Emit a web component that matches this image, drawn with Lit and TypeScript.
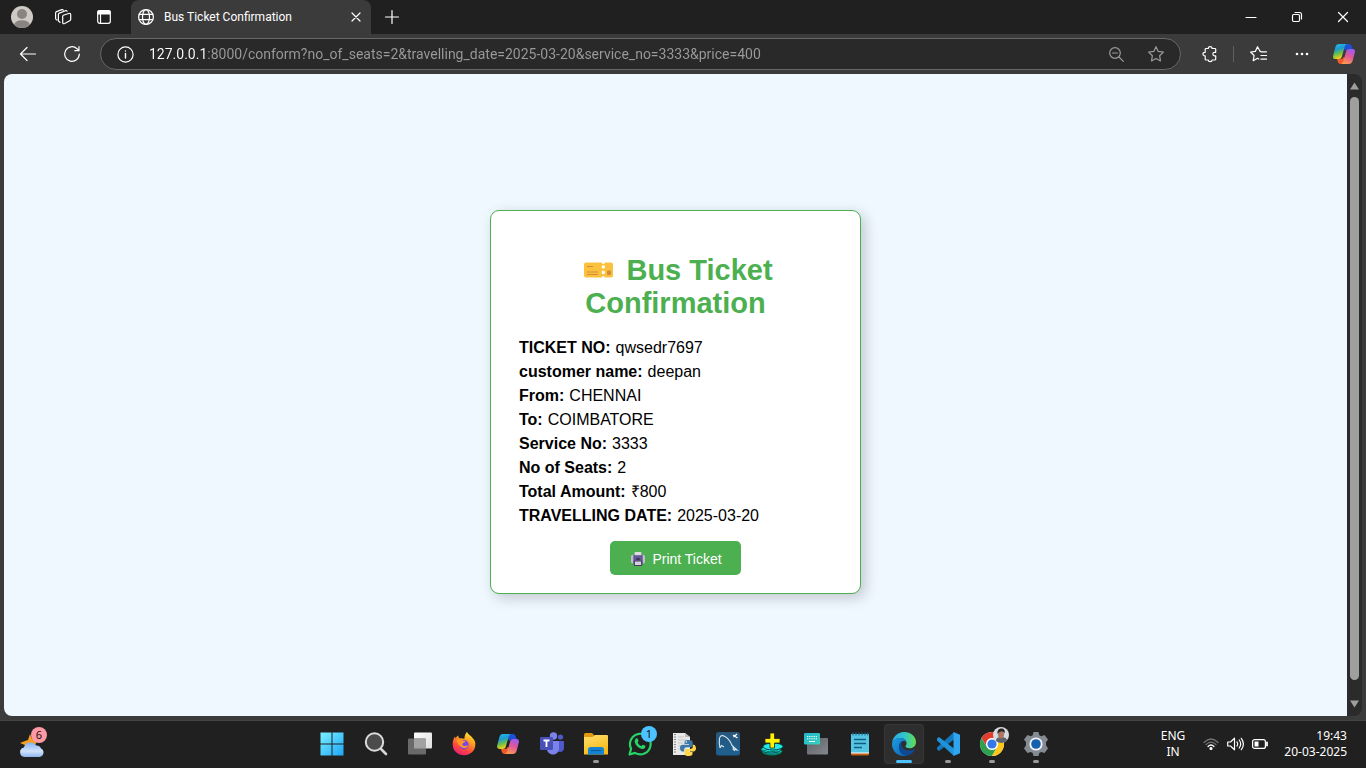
import { LitElement, html, css, svg } from "lit";
import { customElement } from "lit/decorators.js";

const line = css`
  .ln { fill: none; stroke: currentColor; stroke-width: 1.2; stroke-linecap: round; stroke-linejoin: round; }
`;

const copilot = (id: string) => svg`
  <defs>
    <linearGradient id="${id}a" x1="0" y1="0" x2="0.3" y2="1"><stop offset="0" stop-color="#1fc0f5"/><stop offset=".4" stop-color="#1f9ad0"/><stop offset=".7" stop-color="#6cc04a"/><stop offset="1" stop-color="#f2d018"/></linearGradient>
    <linearGradient id="${id}b" x1=".7" y1="0" x2=".3" y2="1"><stop offset="0" stop-color="#9b5cf0"/><stop offset=".45" stop-color="#e0569c"/><stop offset="1" stop-color="#fc9a4e"/></linearGradient>
  </defs>
  <path d="M12 2h5q2 0 2.600 2l1 3h-4q-2 0-2.700 2l-1.500-1z" fill="#1b50d8"/>
  <path d="M12 22H8.500q-2 0-2.600-2L5 17h4q2 0 2.500-2l1.500 1z" fill="#ee5a2c"/>
  <path d="M6.500 2H15q-1.600.4-2.200 2.400L9.700 15q-.6 2-2.700 2H3.500Q.3 17 1.200 13.500L3.400 5Q4.300 2 6.500 2z" fill="url(#${id}a)"/>
  <path d="M17.500 22H9q1.600-.4 2.200-2.400L14.300 9q.6-2 2.700-2h3.500q3.200 0 2.300 3.500L20.600 19q-.9 3-3.100 3z" fill="url(#${id}b)"/>`;

const appIcons: { name: string; run?: boolean; active?: boolean; badge?: string; art: unknown }[] = [
  {
    name: "Start",
    art: svg`<defs><linearGradient id="win" x1="0" y1="0" x2="1" y2="1" gradientUnits="objectBoundingBox"><stop offset="0" stop-color="#7cf0ff"/><stop offset="1" stop-color="#1ca6f8"/></linearGradient></defs>
      <path d="M.5.500h11v11H.500zM12.500.500h11v11h-11zM.5 12.500h11v11H.500zM12.500 12.500h11v11h-11z" fill="url(#win)"/>`,
  },
  {
    name: "Search",
    art: svg`<circle cx="10.500" cy="10" r="8.700" fill="#4b4b4b" stroke="#dcdcdc" stroke-width="2"/><path d="M17 17l5 5" stroke="#d5d5d5" stroke-width="2.600" stroke-linecap="round"/>`,
  },
  {
    name: "Task view",
    art: svg`<defs><linearGradient id="tv" x2="1" y2="1"><stop offset="0" stop-color="#fff"/><stop offset="1" stop-color="#dedede"/></linearGradient></defs>
      <rect x="6" y=".5" width="18" height="16" rx="1" fill="url(#tv)"/><rect x="0" y="6.500" width="18" height="16" rx="1" fill="#6a6a6a"/><path d="M6 6.500h11q1 0 1 1v9H6z" fill="#a2a2a2"/>`,
  },
  {
    name: "Firefox",
    art: svg`<defs><linearGradient id="ff" x1=".8" y1="0" x2=".3" y2="1"><stop offset="0" stop-color="#ffee3d"/><stop offset=".35" stop-color="#ffa21f"/><stop offset=".7" stop-color="#ff4a3d"/><stop offset="1" stop-color="#ea1b7a"/></linearGradient></defs>
      <path d="M15 0c1 2.500 4.500 4 6 6.500C23.300 9 23.500 11 23.300 13 23 19 18 23.300 12 23.300S.7 19 .7 12.500C.7 9 1.500 6.500 3 4.500l.6 2C4.300 5 5 4 6.200 3.400 6.300 5 7 5.900 8 6.300c1.500-.2 3 0 4.400.5C12.500 4 13.300 1.500 15 0z" fill="url(#ff)"/>
      <circle cx="12" cy="12.800" r="4.700" fill="#7a45e8"/><path d="M4.500 8.500c2-1.800 5-1.500 6.300 0l2.700.6c-.3 1.700-2.500 1.800-3 2.600-.5 1 .2 2.300 2 2.200 1.600 0 2.300-.8 3.600-.4-1 2.300-3.200 3-5.200 2.300-3.500-1-4.500-3.600-6.400-7.300z" fill="#ff9822"/>`,
  },
  { name: "Copilot", art: copilot("tb") },
  {
    name: "Teams",
    art: svg`<circle cx="20.500" cy="5" r="2.600" fill="#5059c9"/><circle cx="13.500" cy="4" r="3.700" fill="#7b83eb"/><path d="M17 9h6q1 0 1 1v5.500c0 3-2 4.500-4 4.500s-3-1-3-1z" fill="#5059c9"/><path d="M8 9h11v7c0 4-2.500 6.500-6 6.500S7.500 20 7 18z" fill="#7b83eb"/><rect x="0" y="5" width="13" height="13" rx="1.300" fill="#4951b8"/><path d="M3.500 8.500h6M6.500 8.500V15" stroke="#fff" stroke-width="1.800"/>`,
  },
  {
    name: "File Explorer", run: true,
    art: svg`<defs><linearGradient id="fe" y2="1" x2=".4"><stop offset="0" stop-color="#ffdf70"/><stop offset="1" stop-color="#f9b916"/></linearGradient></defs>
      <path d="M0 2.500Q0 1 1.500 1H8l2.500 2.500L9 6H0z" fill="#e09a10"/><path d="M0 5h8.500L11 3h12q1 0 1 1v18.500H0z" fill="url(#fe)"/><path d="M4 22.500V17.500Q4 15 6.500 15h11q2.500 0 2.500 2.500v5z" fill="#1583d3"/><path d="M7 18.500h10" stroke="#0b5ca0" stroke-width="1.200"/>`,
  },
  {
    name: "WhatsApp", badge: "1",
    art: svg`<path d="M1.500 22.500l1.600-5.800A10.300 10.300 0 1 1 7 20.900z" fill="#202020" stroke="#25d366" stroke-width="2.200" stroke-linejoin="round"/><path d="M8 6.500c1-.6 1.600-.2 2 1l.5 1.300c.1.700-.9 1.300-.8 1.900.8 1.500 2 2.600 3.500 3.300.7.200 1.200-1.200 1.900-1.200l2.100 1c.5.400.1 2-.8 2.700-1.800 1.200-5 0-7-2-2.300-2.200-4-5.800-1.400-8z" fill="#25d366"/>`,
  },
  {
    name: "Python IDLE",
    art: svg`<path d="M1 1h12l5 4v18H1z" fill="#e9e9e9"/><path d="M13 1l5 4h-5z" fill="#b9b9b9"/><path d="M3 2v20" stroke="#666" stroke-width="1.500" stroke-dasharray="1 1.500"/><path d="M6 5h6M6 8h9M6 11h5M6 14h3M6 17h3" stroke="#c5c5c5"/>
      <path d="M16 8c-3 0-3.500 1-3.500 2.200V12H17v.8h-6.300C9 12.800 8 14 8 16s1 3.400 2.500 3.400h1.700v-2c0-1.300 1.200-2.200 2.500-2.200h4c1.200 0 2-.9 2-2v-3C20.700 8.800 19.500 8 16 8z" fill="#3c78a8"/><path d="M17 24c3 0 3.500-1 3.500-2.200V20H16v-.6h6c1.200-.3 2-1.600 2-3.200s-1-3.500-2.200-3.500h-1v2c0 1.300-1.200 2.200-2.500 2.200h-3.600c-1.200 0-2 .9-2 2v3c0 1.400 1.200 2.100 4.300 2.100z" fill="#ffd748"/><circle cx="14.300" cy="10" r=".8" fill="#fff"/>`,
  },
  {
    name: "MySQL Workbench",
    art: svg`<defs><linearGradient id="my" x2="0" y2="1"><stop offset="0" stop-color="#28577b"/><stop offset="1" stop-color="#1e6090"/></linearGradient></defs><rect width="24" height="23.500" rx="2.500" fill="url(#my)"/><path d="M4 16c-.8-4-1-7-.5-9.500C4 3.800 6 3 8 4c4 2 6.500 5 8 9.500l5 4.500-4.500-1M16.500 13.500l2 5.500M4 16l1.500-2.500L8 15" fill="none" stroke="#d9e7f0" stroke-width="1.100"/><path d="M17 3l4.500 3M21 2l-3.500 3" stroke="#fff" stroke-width="1.300"/>`,
  },
  {
    name: "MySQL Installer",
    art: svg`<ellipse cx="12" cy="19.500" rx="10" ry="3.700" fill="#19c7c9" stroke="#063"/><ellipse cx="11" cy="17.500" rx="10" ry="3.500" fill="#20e0e0" stroke="#044"/><ellipse cx="13" cy="14.500" rx="10" ry="3.500" fill="#24e8e6" stroke="#044"/><path d="M3 20.500q8 4 18 0M2 18q7 3 16 1" stroke="#076" fill="none"/><path d="M10 1h4.500v5.500H20V11h-5.500v5H10v-5H5V6.500h5z" fill="#fff200" stroke="#222" stroke-width=".8"/>`,
  },
  {
    name: "On-screen keyboard",
    art: svg`<defs><linearGradient id="kb" x2="1" y2="1"><stop offset="0" stop-color="#20b6cd"/><stop offset="1" stop-color="#3ad3bc"/></linearGradient><linearGradient id="kc" x2="1" y2="1"><stop offset="0" stop-color="#5d6064"/><stop offset="1" stop-color="#85888e"/></linearGradient></defs>
      <rect x="3" y="6" width="21" height="16.500" rx="1" fill="url(#kc)"/><rect x="0" y="1" width="16" height="11.500" rx="1.300" fill="url(#kb)"/><path d="M3 4.500h10M3 6.800h10" stroke="#fff" stroke-width="1.100" stroke-dasharray="1.200 1"/><path d="M5 9.500h6" stroke="#fff"/>`,
  },
  {
    name: "Notepad",
    art: svg`<path d="M3 20h18v2.500q0 1-1 1H4q-1 0-1-1z" fill="#c25d14"/><path d="M3 20h18v1.500H3z" fill="#fff"/><path d="M3 2h18v18.500H3z" fill="#55c5e4"/><path d="M5 .5v3M8 .5v3M11 .5v3M14 .5v3M17 .5v3M19.800.500v3" stroke="#1d6c8d" stroke-width="1.100"/><path d="M6 7.500h12M6 11.500h12M6 15.500h8" stroke="#115e7f" stroke-width="1.500"/>`,
  },
  {
    name: "Microsoft Edge", run: true, active: true,
    art: svg`<defs><linearGradient id="ea" x1="0" y1=".3" x2="1" y2=".3"><stop offset="0" stop-color="#2aa9e4"/><stop offset=".5" stop-color="#30c5cf"/><stop offset="1" stop-color="#63db4e"/></linearGradient><linearGradient id="eb" y2="1"><stop offset="0" stop-color="#1b9de2"/><stop offset="1" stop-color="#1164b5"/></linearGradient></defs>
      <path d="M0 11C.6 5 5.500 0 12 0c7 0 12 4.800 12 10 0 4-3 6.300-6.500 6.300-3 0-4-1.200-4-2 0-.8 1.300-1.300 1-3.600C14 8 12 6 8.500 6 4 6 .8 8.500 0 11z" fill="url(#ea)"/>
      <path d="M0 12C.3 8 4 6 8.500 6c3.500 0 5.500 2 6 4.300C13.500 9 12 8.700 11 9c-3 1-4 4-3.500 7C8 20 11.500 23 14.700 23.700 13.800 24 13 24 12 24 5 24 0 18.500 0 12z" fill="url(#eb)"/><path d="M11 9c-1.500 1.300-2 3-1.300 5 1 3.300 5 4.700 8.300 4.500 2-.2 3.500-.8 4.700-1.500.3 0 .5.300.3.600C21.300 21 18.500 23.500 14.700 23.700 10 23.500 7 20 7 15.500 7 12 8.500 9.500 11 9z" fill="#0d4a92"/>`,
  },
  {
    name: "Visual Studio Code", run: true,
    art: svg`<path d="M18 0L1 15.500v2l2 1.500 15-11.500z" fill="#1478bd"/><path d="M18 24L1 8.500v-2L3 5l15 11.500z" fill="#1e93da"/><path d="M17.500 0L24 2.800v18.400L17.500 24z" fill="#2fa5f0"/>`,
  },
  {
    name: "Google Chrome", run: true,
    art: svg`<circle cx="12" cy="12" r="12" fill="#fff"/><path d="M1.600 6A12 12 0 0 1 22.400 6H12a6 6 0 0 0-5.200 9z" fill="#e33b2e"/><path d="M1.600 6A12 12 0 0 0 12 24l5.200-9a6 6 0 0 1-10.400 0z" fill="#2fa04f"/><path d="M22.400 6A12 12 0 0 1 12 24l5.200-9A6 6 0 0 0 12 6z" fill="#fdc81a"/><circle cx="12" cy="12" r="5.800" fill="#fff"/><circle cx="12" cy="12" r="4.600" fill="#3478e8"/>
      <circle cx="21" cy="3" r="8" fill="#d8dbe0"/><path d="M16 9c0-3 2-4 5-4s6 1 6 3.500A8 8 0 0 1 16 9z" fill="#5e626b"/><ellipse cx="21" cy="2.500" rx="3" ry="4" fill="#a97662"/><path d="M17.500 2c-.5-4 1.500-5.500 4-5.500s4 2 3 5c-1-3-4-3.500-7 .5z" fill="#2a2525"/>`,
  },
  {
    name: "Settings", run: true,
    art: svg`<path d="M9.500 0h5l.8 3.200 2 1L20.500 3 24 7.500l-2 2.700v3L24 16.500 20.500 21l-3.200-1-2 1-.8 3h-5l-.8-3-2-1-3.200 1L0 16.500l2-3.300v-3L0 7.500 3.500 3l3.200 1.200 2-1z" fill="#858b93"/><circle cx="12" cy="12" r="6.600" fill="#f1f3f5"/><circle cx="12" cy="12" r="4.800" fill="#1560ad"/>`,
  },
];

@customElement("browser-chrome")
export class BrowserChrome extends LitElement {
  static styles = [line, css`
    :host { display: block; color: #fff; font-family: Roboto, "Open Sans", sans-serif; }
    button { all: unset; display: grid; place-items: center; box-sizing: border-box; }
    svg { display: block; overflow: visible; }
    .titlebar { display: flex; height: 34px; background: #202020; }
    .left { display: flex; align-items: center; padding-left: 1px; width: 129px; box-sizing: border-box; }
    .left button { width: 41px; }
    .tab { display: flex; align-items: center; width: 240px; height: 34px; box-sizing: border-box; padding: 0 8px 0 7px; gap: 10px; background: #3b3b3b; border-radius: 8px 8px 0 0; margin-left: 2px; font-size: 12px; white-space: nowrap; }
    .tab .title { flex: 1; }
    .plus { width: 42px; }
    .window { display: flex; margin-left: auto; }
    .window button { width: 46px; }
    .toolbar { display: flex; align-items: center; height: 40px; background: #3b3b3b; }
    .nav { display: flex; padding-left: 6px; padding-right: 6px; }
    .nav button { width: 44px; }
    .address { flex: 1; display: flex; align-items: center; height: 32px; box-sizing: border-box; border: 1px solid #686868; border-radius: 16px; background: #292929; padding: 0 4px 0 16px; }
    .url { flex: 1; min-width: 0; border: 0; outline: 0; padding: 0 0 0 15px; height: 28px; font: 14px Roboto, sans-serif; color: transparent; background: linear-gradient(90deg, #fff 73px, #9b9b9b 73px); background-clip: text; -webkit-background-clip: text; }
    .address button { width: 40px; color: #9a9a9a; }
    .tools { display: flex; align-items: center; padding-left: 6px; }
    .tools button { width: 46px; }
    .rule { width: 1px; height: 16px; background: #606060; }
    .tools .wide { width: 48px; }
    .tools .more { width: 40px; }
    .tools .pilot { width: 44px; }
  `];

  render() {
    return html`
      <div class="titlebar">
        <div class="left">
          <button aria-label="Profile"><svg width="22" height="22" viewBox="0 0 22 22"><circle cx="11" cy="11" r="11" fill="#cecac5"/><circle cx="11" cy="8" r="5" fill="#89847f"/><path d="M3.200 18.800Q4 14.300 11 14.300t7.800 4.500A11 11 0 0 1 3.200 18.800z" fill="#89847f"/></svg></button>
          <button aria-label="Workspaces"><svg class="ln" width="16" height="16" viewBox="0 0 16 16"><path d="M8.300 6.300l5.400-1.800q2-.5 2 1.200v4.600q0 1-1 1.400l-5 2.800q-2 .8-2-1V7.500q0-.9.600-1.200zM5 13.300l-1-.8q-.6-.5-.6-1.300V5.500q0-1 1-1.400l6-2.400q1.200-.3 1.700.6M2 11l-.9-.6Q.6 10 .6 9.200V4q0-1 1-1.400L6.800.600q1-.2 1.500.5"/></svg></button>
          <button aria-label="Tab actions"><svg class="ln" width="14" height="14" viewBox="0 0 14 14"><rect x=".7" y=".7" width="12.600" height="12.600" rx="2"/><path d="M1 1h12v3H1z" fill="#fff"/><path d="M3.500 4v9"/></svg></button>
        </div>
        <div class="tab">
          <svg class="ln" width="16" height="16" viewBox="0 0 16 16"><circle cx="8" cy="8" r="7.400"/><ellipse cx="8" cy="8" rx="3.500" ry="7.400"/><path d="M1.300 5.300h13.400M1.300 10.700h13.400"/></svg>
          <span class="title">Bus Ticket Confirmation</span>
          <button aria-label="Close tab"><svg class="ln" width="14" height="14" viewBox="0 0 14 14"><path d="M3 3l8 8M11 3l-8 8"/></svg></button>
        </div>
        <button class="plus" aria-label="New tab"><svg class="ln" width="14" height="14" viewBox="0 0 14 14"><path d="M7 .5v13M.5 7h13"/></svg></button>
        <div class="window">
          <button aria-label="Minimize"><svg class="ln" width="10" height="10" viewBox="0 0 10 10"><path d="M0 5.500h10"/></svg></button>
          <button aria-label="Restore"><svg class="ln" width="10" height="10" viewBox="0 0 10 10"><rect x=".5" y="2.500" width="7" height="7" rx="1.200"/><path d="M3 .5h4.500q2 0 2 2V7"/></svg></button>
          <button aria-label="Close window"><svg class="ln" width="10" height="10" viewBox="0 0 10 10"><path d="M.5.500l9 9M9.500.500l-9 9"/></svg></button>
        </div>
      </div>
      <div class="toolbar">
        <div class="nav">
          <button aria-label="Back"><svg class="ln" width="16" height="14" viewBox="0 0 16 14"><path d="M15.500 7H.700M7 .5L.5 7 7 13.500"/></svg></button>
          <button aria-label="Refresh"><svg class="ln" width="16" height="16" viewBox="0 0 16 16"><path d="M15.300 8A7.300 7.300 0 1 1 13 2.700L14.800 4.500M15 .5v4.200h-4.200"/></svg></button>
        </div>
        <div class="address">
          <svg class="ln" width="17" height="17" viewBox="0 0 17 17"><circle cx="8.500" cy="8.500" r="7.600"/><path d="M8.500 7.500v4.500M8.500 4.900v.2" stroke-width="1.400"/></svg>
          <input class="url" aria-label="Address" value="127.0.0.1:8000/conform?no_of_seats=2&amp;travelling_date=2025-03-20&amp;service_no=3333&amp;price=400">
          <button aria-label="Zoom"><svg class="ln" width="15" height="15" viewBox="0 0 15 15"><circle cx="6" cy="6" r="5.300"/><path d="M3.500 6h5M10 10l4.300 4.300"/></svg></button>
          <button aria-label="Add to favorites"><svg class="ln" width="16" height="16" viewBox="0 0 16 16"><path d="M8 .7l2.200 4.700 5.200.7-3.800 3.600.9 5.200L8 12.400l-4.500 2.500.9-5.200L.6 6.100l5.200-.7z"/></svg></button>
        </div>
        <div class="tools">
          <button aria-label="Extensions"><svg class="ln" width="16" height="16" viewBox="0 0 16 16"><path d="M4 2.500h2.300c0-2.600 3.800-2.600 3.800 0h2.800q.8 0 .8.800v3h-1.200c-2.200 0-2.200 3.600 0 3.600h1.200v3.300q0 .8-.8.800h-2.800c0 2.200-3.800 2.200-3.800 0H4q-.8 0-.8-.8V9.900C.2 9.900.2 6.300 3.200 6.300v-3q0-.8.8-.8z"/></svg></button>
          <span class="rule"></span>
          <button class="wide" aria-label="Favorites"><svg class="ln" width="17" height="16" viewBox="0 0 17 16"><path d="M10.800 5.300H10L7.500.700 5.300 5.400.6 6l3.500 3.500-.9 5.200 4.300-2.400 1.300.7M11 5.800h5.500M11 9.500h5.500M11 13.200h5.500"/></svg></button>
          <button class="more" aria-label="Settings and more"><svg width="14" height="4" viewBox="0 0 14 4" fill="#fff"><circle cx="2" cy="2" r="1.300"/><circle cx="7" cy="2" r="1.300"/><circle cx="12" cy="2" r="1.300"/></svg></button>
          <button class="pilot" aria-label="Copilot"><svg width="24" height="24" viewBox="0 0 24 24">${copilot("bar")}</svg></button>
        </div>
      </div>`;
  }
}

@customElement("ticket-page")
export class TicketPage extends LitElement {
  static styles = css`
    :host { display: flex; min-height: 0; padding: 0 4px 4px; background: #3b3b3b; font-family: "Liberation Sans", Arial, sans-serif; color: #000; }
    .page { flex: 1; display: grid; place-items: center; padding-top: 14px; background: #f0f8ff; border-radius: 8px 0 0 8px; }
    .card { width: 371px; box-sizing: border-box; padding: 43px 28px 18px; background: #fff; border: 1px solid #4caf50; border-radius: 9px; box-shadow: 4px 4px 14px rgba(0, 0, 0, 0.2); text-align: center; }
    h1 { margin: 0 0 16px; font-size: 29px; line-height: 33px; color: #4caf50; }
    .emoji { display: inline-block; vertical-align: baseline; }
    .details { margin: 0; text-align: left; font-size: 16px; line-height: 24px; }
    .row { display: flex; gap: 5px; }
    dt { font-weight: bold; }
    dd { margin: 0; }
    .print { display: inline-flex; align-items: center; gap: 6px; height: 34px; margin-top: 13px; padding: 1px 19px 0 20px; border: 0; border-radius: 5px; background: #4caf50; color: #fff; font: 14px "Liberation Sans", Arial, sans-serif; vertical-align: top; }
    .scroll { display: flex; flex-direction: column; align-items: center; width: 15px; background: #2b2b2b; border-radius: 0 8px 8px 0; padding: 8px 0; box-sizing: border-box; }
    .thumb { flex: 1; width: 9px; margin: 7px 0 20px; border-radius: 5px; background: #9f9f9f; }
  `;

  private rows = [
    ["TICKET NO:", "qwsedr7697"],
    ["customer name:", "deepan"],
    ["From:", "CHENNAI"],
    ["To:", "COIMBATORE"],
    ["Service No:", "3333"],
    ["No of Seats:", "2"],
    ["Total Amount:", "₹800"],
    ["TRAVELLING DATE:", "2025-03-20"],
  ];

  render() {
    return html`
      <main class="page">
        <section class="card">
          <h1><svg class="emoji" width="40" height="20" viewBox="0 0 40 20" aria-hidden="true"><path d="M8 2.500h15.800a1.500 1.500 0 0 0 3 0H33q2 0 2 2v11q0 2-2 2h-6.200a1.500 1.500 0 0 0-3 0H8q-2 0-2-2v-11q0-2 2-2z" fill="#fac23c"/><circle cx="25.300" cy="7" r="1.700" fill="#fff"/><circle cx="25.300" cy="12.500" r="1.700" fill="#fff"/><path d="M9 6.500h6M9 12h11M9 14.500h11" stroke="#d38b3a" stroke-width="1.200"/><rect x="29" y="10.500" width="4" height="4.500" rx="1" fill="#d38b3a"/></svg> Bus Ticket Confirmation</h1>
          <dl class="details">
            ${this.rows.map(([k, v]) => html`<div class="row"><dt>${k}</dt><dd>${v}</dd></div>`)}
          </dl>
          <button class="print"><svg width="16" height="16" viewBox="0 0 16 16" aria-hidden="true"><path d="M1 5.500q0-1.700 1.700-1.700h10.600q1.700 0 1.700 1.700V11q0 1.300-1.500 1.300h-11Q1 12.300 1 11z" fill="#c3bdd0"/><path d="M3.300 3.800h9.400v8.500H3.300z" fill="#635994"/><path d="M4.700 1h6.600v3.200H4.700z" fill="#dedbe2"/><path d="M3.700 9.800h8.600V14q0 1-1 1H4.700q-1 0-1-1z" fill="#433b6b"/><path d="M4.900 10.500h6.200v3.500H4.900z" fill="#d5d2da"/><path d="M6.300 8h3.400" stroke="#221d3b" stroke-width="1.200"/></svg>Print Ticket</button>
        </section>
      </main>
      <div class="scroll" aria-hidden="true">
        <svg width="9" height="8" viewBox="0 0 9 8"><path d="M4.500.500L9 7.500H0z" fill="#9f9f9f"/></svg>
        <span class="thumb"></span>
        <svg width="9" height="8" viewBox="0 0 9 8"><path d="M4.500 7.500L9 .5H0z" fill="#9f9f9f"/></svg>
      </div>`;
  }
}

@customElement("task-bar")
export class TaskBar extends LitElement {
  static styles = [line, css`
    :host { display: grid; grid-template-columns: 1fr auto 1fr; align-items: center; height: 48px; padding-left: 2px; box-sizing: border-box; box-shadow: inset 0 1px #454545; background: #202020; color: #fff; font: 11px/16px "Noto Sans", sans-serif; }
    button { all: unset; position: relative; box-sizing: border-box; display: grid; place-items: center; }
    svg { display: block; overflow: visible; }
    .weather { width: 28px; height: 28px; margin-left: 16px; }
    .badge { position: absolute; display: grid; place-items: center; width: 16px; height: 16px; border-radius: 8px; color: #111; }
    .alert { right: -1px; top: -3px; background: #ff99a4; }
    .count { right: 3px; top: 2px; background: #4cc2ff; }
    .apps { display: flex; gap: 4px; }
    .app { width: 40px; height: 40px; border-radius: 4px; }
    .active { background: #2e2e2e; box-shadow: inset 0 0 0 1px #373737; }
    .dot { position: absolute; left: 17px; bottom: 1px; width: 6px; height: 3px; border-radius: 2px; background: #9a9a9a; }
    .active .dot { left: 12px; width: 16px; background: #4cc2ff; }
    .tray { display: flex; align-items: center; justify-content: flex-end; padding-right: 19px; }
    .lang { text-align: center; margin-right: 18px; }
    .status { display: flex; align-items: center; gap: 8px; margin-right: 16px; }
    .clock { text-align: right; }
    .lang, .clock { font-size: 12px; }
  `];

  render() {
    return html`
      <button class="weather" aria-label="Weather, 6 alerts">
        <svg width="28" height="28" viewBox="0 0 28 28"><defs><linearGradient id="cl" x2="0" y2="1"><stop offset="0" stop-color="#83b2f5"/><stop offset=".6" stop-color="#d2e3fa"/><stop offset="1" stop-color="#8eb6ee"/></linearGradient></defs><path d="M12 4l2 5 5 2-5 10-8-3 1-3-5-2 5-2 3-1z" fill="#f5a024"/><path d="M6.500 27a4.800 4.800 0 0 1-.5-9.500A7 7 0 0 1 18.500 15.500q3.500 0 4.500 3a4.500 4.500 0 0 1-1.500 8.500z" fill="url(#cl)"/></svg>
        <span class="badge alert">6</span>
      </button>
      <nav class="apps" aria-label="Applications">
        ${appIcons.map((a) => html`<button class="app ${a.active ? "active" : ""}" aria-label=${a.name}>
          <svg width="24" height="24" viewBox="0 0 24 24">${a.art}</svg>
          ${a.badge ? html`<span class="badge count">${a.badge}</span>` : ""}
          ${a.run ? html`<span class="dot"></span>` : ""}
        </button>`)}
      </nav>
      <div class="tray">
        <div class="lang">ENG<br>IN</div>
        <div class="status">
          <svg class="ln" width="16" height="12" viewBox="0 0 16 12"><path d="M1 4.500Q8-2.500 15 4.500M3 6.600Q8 1.500 13 6.600" stroke="#777"/><path d="M5 8.500Q8 5.500 11 8.500"/><circle cx="8" cy="10.500" r="1" fill="#fff"/></svg>
          <svg class="ln" width="17" height="14" viewBox="0 0 17 14"><path d="M.7 5h2.800L7.500 1.200v11.600L3.500 9H.700zM10 4.800q1.600 2.200 0 4.400M12.200 3q3 4 0 8M14.300 1.300q4.200 5.700 0 11.400"/></svg>
          <svg class="ln" width="16" height="10" viewBox="0 0 16 10"><rect x=".6" y=".6" width="12.800" height="8.800" rx="2"/><path d="M2.500 2.500h4v5h-4z" fill="#fff" stroke="none"/><path d="M15 3.500v3" stroke-width="1.800"/></svg>
        </div>
        <div class="clock"><time>19:43</time><br><time>20-03-2025</time></div>
      </div>`;
  }
}

@customElement("app-root")
export class AppRoot extends LitElement {
  static styles = css`
    :host { display: grid; grid-template-rows: auto 1fr auto; height: 100vh; background: #3b3b3b; }
  `;

  render() {
    return html`<browser-chrome></browser-chrome><ticket-page></ticket-page><task-bar></task-bar>`;
  }
}
